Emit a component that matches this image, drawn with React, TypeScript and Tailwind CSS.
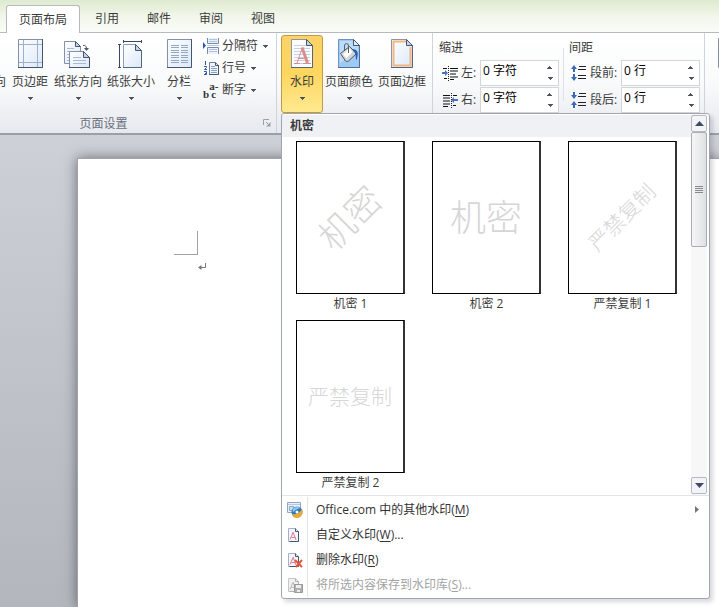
import { useState } from "react";
import type { ReactNode } from "react";

const tabs = ["页面布局", "引用", "邮件", "审阅", "视图"];

const watermarks = [
  { name: "机密 1", text: "机密", style: "text-[36px] -rotate-45" },
  { name: "机密 2", text: "机密", style: "text-[36px]" },
  { name: "严禁复制 1", text: "严禁复制", style: "text-[21px] -rotate-45" },
  { name: "严禁复制 2", text: "严禁复制", style: "text-[21px]" },
];

function Caret() {
  return (
    <svg width="5" height="3" viewBox="0 0 5 3" className="shrink-0">
      <path d="M0 0h5v1H4v1H3v1H2V2H1V1H0z" fill="#505358" />
    </svg>
  );
}

function MarginsIcon() {
  return (
    <svg width="32" height="32" viewBox="0 0 32 32">
      <defs>
        <linearGradient id="paper" x1="0" y1="0" x2="1" y2="1">
          <stop offset="0" stopColor="#fff" />
          <stop offset="1" stopColor="#dbe8f8" />
        </linearGradient>
      </defs>
      <path d="M4.500 1.500h24v28h-24z" fill="url(#paper)" stroke="#8290a8" />
      <path d="M4 29.500h24.500V1" fill="none" stroke="#465672" />
      <path d="M9.500 2v27M23.500 2v27M5 6.500h23M5 24.500h23" stroke="#9fb0c9" />
    </svg>
  );
}

function OrientationIcon() {
  return (
    <svg width="32" height="32" viewBox="0 0 32 32">
      <path d="M2.500 3.500h11l5 5v17h-16z" fill="url(#paper)" stroke="#8290a8" />
      <path d="M13.500 3.500v5h5z" fill="#c3d3e8" stroke="#465672" />
      <path d="M5 10.500h7M5 13.500h4M5 16.500h2M5 19.500h2M5 22.500h2" stroke="#a9bad2" />
      <path d="M7.500 13.500h14l6 6v10h-20z" fill="url(#paper)" stroke="#8290a8" />
      <path d="M21.500 13.500v6h6z" fill="#c3d3e8" stroke="#465672" />
      <path d="M7 29.500h20.500V19" fill="none" stroke="#465672" />
      <path d="M11 19.500h8M11 22.500h13M11 25.500h13" stroke="#a9bad2" />
      <path d="M21 7.500q3-1 3.500 3" fill="none" stroke="#4a566e" />
      <path d="M22 10h5l-2.500 3z" fill="#4a566e" />
    </svg>
  );
}

function SizeIcon() {
  return (
    <svg width="32" height="32" viewBox="0 0 32 32">
      <path d="M8.500 6.500h12l6 6v17h-18z" fill="url(#paper)" stroke="#8f9db4" />
      <path d="M20.500 6.500v6h6z" fill="#c3d3e8" stroke="#465672" />
      <path d="M8 29.500h18.500V12" fill="none" stroke="#56657f" />
      <path d="M8 3.500h18M8.500 2v3M26.500 2v3M4.500 7v22M3 6.500h3M3 29.500h3" stroke="#3a4868" />
    </svg>
  );
}

function ColumnsIcon() {
  return (
    <svg width="32" height="32" viewBox="0 0 32 32">
      <path d="M4.500 1.500h24v28h-24z" fill="url(#paper)" stroke="#8290a8" />
      <path d="M4 29.500h24.500V1" fill="none" stroke="#465672" />
      <path
        d="M8 7.500h8M18 7.500h7M8 9.500h8M18 9.500h7M8 12.500h8M18 12.500h7M8 14.500h8M18 14.500h7M8 17.500h8M18 17.500h7M8 19.500h8M18 19.500h7M8 22.500h8M18 22.500h7M8 24.500h8M18 24.500h7"
        stroke="#94a6c2"
      />
    </svg>
  );
}

function WatermarkIcon() {
  return (
    <svg width="32" height="32" viewBox="0 0 32 32">
      <path d="M5.500 1.500h15l6 6v22h-21z" fill="#fbfcfe" stroke="#8b95a6" />
      <path d="M8 7.500h12M8 10.500h16M8 13.500h16M8 16.500h16M8 19.500h16M8 22.500h16M8 25.500h16" stroke="#c6d1e2" />
      <path d="M8 25.500h6M17 25.500h8M11 25L16.500 9.500M12.500 20.500h8" stroke="#d98e8e" fill="none" />
      <path d="M16 9.500L21.500 25" stroke="#d98e8e" strokeWidth="3" />
      <path d="M20.500 1.500v6h6z" fill="#c3d3e8" stroke="#465672" />
      <path d="M5 29.500h21.500V7" fill="none" stroke="#56657f" />
    </svg>
  );
}

function PageColorIcon() {
  return (
    <svg width="32" height="32" viewBox="0 0 32 32">
      <path d="M5.500 1.500h15l6 6v22h-21z" fill="#9ccaf4" stroke="#6f93bd" />
      <path d="M7 3h13v5h5v5L7 25z" fill="#bcdcf9" />
      <path d="M20.500 1.500v6h6z" fill="#e4effb" stroke="#465672" />
      <path d="M5 29.500h21.500V7" fill="none" stroke="#4d6e98" />
      <path d="M7.500 15.500l9-7 7 7-8 7.500q-2 1-3 0z" fill="#d4d7da" stroke="#50565e" />
      <path d="M10 16l6.500-5.500 3 3.500-6 6z" fill="#fff" />
      <path d="M11.500 12V8q0-2.500 2-2.500t2 2.500v7" fill="none" stroke="#5a6069" />
      <path d="M19 11c6 0 7 4 4.500 11-1.500-2 .5-6-3-8.500z" fill="#2a60ad" />
    </svg>
  );
}

function PageBorderIcon() {
  return (
    <svg width="32" height="32" viewBox="0 0 32 32">
      <path d="M5.500 1.500h15l6 6v22h-21z" fill="url(#paper)" stroke="#8b95a6" />
      <path d="M20 3.500H7.500v24h17V9" fill="none" stroke="#f0b684" strokeWidth="2" />
      <path d="M20.500 1.500v6h6z" fill="#c3d3e8" stroke="#465672" />
      <path d="M5 29.500h21.500V7" fill="none" stroke="#56657f" />
    </svg>
  );
}

function PositionIcon() {
  return (
    <svg width="32" height="32" viewBox="0 0 32 32" className="shrink-0">
      <path d="M.5.500h26v29H.5z" fill="url(#paper)" stroke="#8290a8" />
      <path d="M4 5.500h18M4 24.500h18" stroke="#94a6c2" />
      <path d="M8 9h10v10H8z" fill="#e9a55c" />
    </svg>
  );
}

function BreaksIcon() {
  return (
    <svg width="18" height="16" viewBox="0 0 18 16">
      <path d="M4.500 0v5.500h11V0M4.500 16V9.500h11V16" fill="#eaf1fb" stroke="#7489ad" />
      <path d="M6 1.500h8M6 3.500h8M6 11.500h8M6 13.500h8" stroke="#b4c4dd" />
      <path d="M4 7.500h12" stroke="#b9c6da" />
      <path d="M0 4l3 3.500L0 11z" fill="#2b58a8" />
    </svg>
  );
}

function LineNumberIcon() {
  return (
    <svg width="18" height="16" viewBox="0 0 18 16">
      <path d="M6.500 2.500h6l3 3v9h-9z" fill="#eef4fc" stroke="#6d7fa0" />
      <path d="M12.500 2.500v3h3" fill="none" stroke="#465672" />
      <path d="M6 14.500h9.500V5" fill="none" stroke="#465672" />
      <path d="M8 6.500h4M8 8.500h6M8 10.500h6M8 12.500h6" stroke="#8aa1c4" />
      <path d="M2.500 1v4M1 6.500h2.500v1L1.500 9.500H4M1 11.500h2.500v3H1M2 13.500h1" stroke="#2b58a8" fill="none" />
    </svg>
  );
}

function HyphenIcon() {
  return (
    <span className="flex h-4 w-[18px] items-end font-['Liberation_Serif',serif] text-[11px] leading-[8px] font-bold text-[#33363c]">
      <span>b</span>
      <span className="flex flex-col">
        <span>a-</span>
        <span>c</span>
      </span>
    </span>
  );
}

function IndentIcon({ right }: { right?: boolean }) {
  return (
    <svg width="16" height="15" viewBox="0 0 16 15" className="shrink-0">
      {right ? (
        <>
          <path d="M1 2.500h7M1 5h7M1 8h7M1 11h7M1 13.500h5M11 2.500h4M11 12.500h3" stroke="#111" />
          <path d="M9 7l3-3v2h4v2h-4v2z" fill="#4a72b8" />
          <path d="M9.500 0v15" stroke="#222" strokeDasharray="1 1" />
        </>
      ) : (
        <>
          <path d="M8 2.500h8M8 5h8M8 8h6M8 11h8M8 13.500h4M1 2.500h4M2 12.500h3" stroke="#111" />
          <path d="M6 7L3 4v2H0v2h3v2z" fill="#4a72b8" />
          <path d="M6.500 0v15" stroke="#222" strokeDasharray="1 1" />
        </>
      )}
    </svg>
  );
}

function SpacingIcon({ after }: { after?: boolean }) {
  return (
    <svg width="16" height="16" viewBox="0 0 16 16" className="shrink-0">
      <path d="M8 1.500h7M7 4.500h8M7 10.500h8M7 13.500h8" stroke="#222" />
      <path
        d={after ? "M2 0h2v3h2L3 7 0 3h2zM3 9l3 4H4v3H2v-3H0z" : "M3 0l3 4H4v3H2V4H0zM2 9h2v3h2l-3 4-3-4h2z"}
        fill="#3e69b0"
      />
    </svg>
  );
}

function LauncherIcon() {
  return (
    <svg width="8" height="8" viewBox="0 0 8 8">
      <path d="M.5 6V.5H6" fill="none" stroke="#9aa0a9" />
      <path d="M3 3l2 2" stroke="#9aa0a9" />
      <path d="M7.500 3v4.500H3z" fill="#9aa0a9" />
    </svg>
  );
}

function SmallPage({ gray, children }: { gray?: boolean; children?: ReactNode }) {
  const dark = gray ? "#b0b0b0" : "#465672";
  const red = gray ? "#b8b8b8" : "#de7c89";
  return (
    <svg width="16" height="16" viewBox="0 0 16 16">
      <path d="M1.500 1.500h7l3 3v10h-10z" fill={gray ? "#f1f1f1" : "#f2f6fc"} stroke={gray ? "#c6c6c6" : "#a3b0c5"} />
      <path d="M8.500 1.500v3h3v10h-9" fill="none" stroke={dark} />
      <path d="M3 12.500L6 5.500M4.500 10.500h4M6 5l3 8" stroke={red} fill="none" />
      {children}
    </svg>
  );
}

function OfficeIcon() {
  return (
    <svg width="16" height="16" viewBox="0 0 16 16">
      <path d="M.5.500h13v10H.5z" fill="#e8f0fa" stroke="#8fa6c6" />
      <path d="M1 2.500h12" stroke="#b5c8e0" />
      <path d="M2.500 4.500h4v4h-4z" fill="#cfdef0" stroke="#8fa6c6" />
      <circle cx="10" cy="10" r="5.500" fill="#2e78b8" />
      <path d="M5 12c3 1 7 0 10-5 2 4-1 9-5 9-3 0-5-2-5-4z" fill="#e9a93a" />
      <path d="M5.500 7.500c2-3 6-3 7.500-1-3 0-5 2-7 4z" fill="#8bc7ed" />
      <circle cx="10" cy="10" r="1.500" fill="#fff" />
    </svg>
  );
}

function BigButton({ icon, label, width, caret = true, active }: {
  icon: ReactNode;
  label: string;
  width: string;
  caret?: boolean;
  active?: boolean;
}) {
  return (
    <button
      className={`flex h-[78px] shrink-0 flex-col items-center rounded-[3px] border pt-[2px] ${width} ${
        active ? "border-[#c29b42] bg-linear-to-b from-[#fbd367] via-[#fdd65f] to-[#ffe98f]" : "border-transparent"
      }`}
    >
      {icon}
      <span className="mt-1 leading-4 whitespace-nowrap">{label}</span>
      {caret && <span className="mt-[7px] flex"><Caret /></span>}
    </button>
  );
}

function SmallButton({ icon, label }: { icon: ReactNode; label: string }) {
  return (
    <button className="flex h-[22px] items-center gap-px">
      <span className="w-[18px]">{icon}</span>
      <span className="mr-1 whitespace-nowrap">{label}</span>
      <Caret />
    </button>
  );
}

function Spinner({ id, icon, label, initial }: { id: string; icon: ReactNode; label: string; initial: string }) {
  const [value, setValue] = useState(initial);
  const step = (by: number) => {
    const [num, unit] = value.split(" ");
    setValue(`${Math.max(0, parseInt(num) + by)} ${unit}`);
  };

  return (
    <div className="flex h-[26px] items-center">
      {icon}
      <label htmlFor={id} className="ml-[3px] flex-1 whitespace-nowrap">{label}</label>
      <div className="flex h-full w-[79px] border border-[#d3d5d9] bg-white">
        <input
          id={id}
          value={value}
          onChange={(e) => setValue(e.target.value)}
          className="w-full min-w-0 bg-transparent pb-1 pl-[2px] text-black outline-none"
        />
        <div className="flex w-4 shrink-0 flex-col justify-center gap-2">
          <button aria-label={`${label} 增加`} onClick={() => step(1)} className="flex rotate-180 justify-center"><Caret /></button>
          <button aria-label={`${label} 减少`} onClick={() => step(-1)} className="flex justify-center"><Caret /></button>
        </div>
      </div>
    </div>
  );
}

function MenuItem({ icon, label, hotkey, dots, disabled, submenu }: {
  icon: ReactNode;
  label: string;
  hotkey: string;
  dots?: boolean;
  disabled?: boolean;
  submenu?: boolean;
}) {
  return (
    <button disabled={disabled} className="flex h-[25px] w-full items-center text-left text-[#333] disabled:text-[#a3a3a3]">
      <span className="flex h-full w-[26px] items-center border-r border-[#e2e4e7] pl-[5px]">{icon}</span>
      <span className="flex-1 pt-px pl-2">
        {label}(<u className="underline-offset-2">{hotkey}</u>){dots && "..."}
      </span>
      {submenu && (
        <svg width="4" height="7" viewBox="0 0 4 7" className="mr-[10px]">
          <path d="M0 0l4 3.500L0 7z" fill="#777" />
        </svg>
      )}
    </button>
  );
}

function WatermarkMenu() {
  return (
    <div className="absolute top-full left-0 z-10 w-[429px] rounded-[3px] border border-[#a1a5ad] bg-white pb-px shadow-[3px_3px_4px_rgba(60,60,90,0.2)]">
      <div className="flex border-b border-[#e2e4e7]">
        <div className="flex-1 pt-px">
          <h2 className="bg-[#eff1f5] pl-2 leading-[22px] font-bold">机密</h2>
          <div className="grid grid-cols-[repeat(3,109px)] gap-x-[27px] gap-y-2 pt-1 pb-1 pl-[14px]">
            {watermarks.map((mark) => (
              <button key={mark.name} className="flex flex-col items-center">
                <span className="flex h-[153px] w-full items-center justify-center border border-r-2 border-black border-r-[#333]">
                  <span className={`leading-none font-light whitespace-nowrap text-[#d6d6d6] ${mark.style}`}>{mark.text}</span>
                </span>
                <span className="mt-[2px] leading-4">{mark.name}</span>
              </button>
            ))}
          </div>
        </div>
        <div className="mr-[2px] flex w-4 flex-col bg-[#f7f7f8] py-px">
          <button aria-label="向上滚动" className="flex h-[17px] items-center justify-center rounded-[2px] border border-[#b6b9bf] bg-[#f3f4f6]">
            <svg width="9" height="5" viewBox="0 0 9 5"><path d="M4.500 0L9 5H0z" fill="#3f4a6b" /></svg>
          </button>
          <div className="flex h-[115px] flex-col items-center justify-center rounded-[2px] border border-[#a9acb1] bg-linear-to-r from-[#f6f6f7] to-[#dfe0e3]">
            <svg width="8" height="7" viewBox="0 0 8 7"><path d="M0 .5h8M0 2.500h8M0 4.500h8M0 6.500h8" stroke="#85888e" /></svg>
          </div>
          <button aria-label="向下滚动" className="mt-auto flex h-[17px] items-center justify-center rounded-[2px] border border-[#b6b9bf] bg-[#f3f4f6]">
            <svg width="9" height="5" viewBox="0 0 9 5"><path d="M0 0h9L4.500 5z" fill="#3f4a6b" /></svg>
          </button>
        </div>
      </div>
      <div className="pt-px">
        <MenuItem icon={<OfficeIcon />} label="Office.com 中的其他水印" hotkey="M" submenu />
        <MenuItem icon={<SmallPage />} label="自定义水印" hotkey="W" dots />
        <MenuItem
          icon={<SmallPage><path d="M8 8l7 7M15 8l-6 7" stroke="#e4563d" strokeWidth="2" /></SmallPage>}
          label="删除水印"
          hotkey="R"
        />
        <MenuItem
          icon={
            <SmallPage gray>
              <path d="M7.500 7.500h8v8h-8z" fill="#b0b0b0" stroke="#9a9a9a" />
              <path d="M9 8h5v3H9zM10 13h3v2h-3z" fill="#eee" />
            </SmallPage>
          }
          label="将所选内容保存到水印库"
          hotkey="S"
          dots
          disabled
        />
      </div>
    </div>
  );
}

export default function App() {
  const [tab, setTab] = useState("页面布局");

  return (
    <div className="flex min-h-screen flex-col overflow-hidden bg-[#c9cdd2] font-['Open_Sans','Noto_Sans_CJK_SC',sans-serif] text-[12px] text-[#3b3b3b]">
      <nav className="flex h-[33px] items-end border-b border-[#b6babf] bg-linear-to-b from-[#deead0] via-[#f1f6ea] to-[#fbfcf9] pl-[6px]">
        {tabs.map((name) => (
          <button
            key={name}
            onClick={() => setTab(name)}
            className={`h-[28px] rounded-t-[3px] border-x border-t whitespace-nowrap ${
              name === tab ? "-mb-px mr-px border-[#b6babf] bg-white px-3" : "border-transparent px-[13px]"
            }`}
          >
            {name}
          </button>
        ))}
      </nav>

      <div className="relative z-10 flex border-b-2 border-[#9a9fa8] bg-linear-to-b from-white via-[#f9fafb] to-[#e6e9ee]">
        <section className="flex w-[277px] shrink-0 flex-col border-r border-[#d0d3d8] pt-[2px]">
          <div className="flex">
            <button className="flex h-[78px] w-[6px] justify-end overflow-hidden pt-[39px] leading-4">
              <span>向</span>
            </button>
            <BigButton icon={<MarginsIcon />} label="页边距" width="w-12" />
            <BigButton icon={<OrientationIcon />} label="纸张方向" width="w-12" />
            <BigButton icon={<SizeIcon />} label="纸张大小" width="w-[58px]" />
            <BigButton icon={<ColumnsIcon />} label="分栏" width="w-[38px]" />
            <div className="ml-[5px] flex flex-col">
              <SmallButton icon={<BreaksIcon />} label="分隔符" />
              <SmallButton icon={<LineNumberIcon />} label="行号" />
              <SmallButton icon={<HyphenIcon />} label="断字" />
            </div>
          </div>
          <div className="flex h-5 items-center pl-1">
            <h2 className="flex-1 pt-[2px] pr-[60px] text-center text-[#6a707b]">页面设置</h2>
            <button aria-label="页面设置对话框" className="mr-[5px]"><LauncherIcon /></button>
          </div>
        </section>

        <section className="flex shrink-0 border-r border-[#d0d3d8] pt-[2px] pr-[3px] pl-1">
          <div className="relative h-[78px]">
            <BigButton icon={<WatermarkIcon />} label="水印" width="w-[42px]" active />
            <WatermarkMenu />
          </div>
          <BigButton icon={<PageColorIcon />} label="页面颜色" width="w-[52px]" />
          <BigButton icon={<PageBorderIcon />} label="页面边框" width="w-[54px]" caret={false} />
        </section>

        <section className="flex shrink-0 border-r border-[#d0d3d8] pt-[7px] pr-1 pl-[6px]">
          <div className="flex w-[120px] flex-col">
            <h3 className="mb-1 leading-4">缩进</h3>
            <div className="flex flex-col gap-px pl-[3px]">
              <Spinner id="left" icon={<IndentIcon />} label="左:" initial="0 字符" />
              <Spinner id="right" icon={<IndentIcon right />} label="右:" initial="0 字符" />
            </div>
          </div>
          <div className="mr-[5px] ml-1 mt-2 mb-8 w-px bg-[#dfe1e6]" />
          <div className="flex w-[131px] flex-col">
            <h3 className="mb-1 leading-4">间距</h3>
            <div className="flex flex-col gap-px pl-[2px]">
              <Spinner id="before" icon={<SpacingIcon />} label="段前:" initial="0 行" />
              <Spinner id="after" icon={<SpacingIcon after />} label="段后:" initial="0 行" />
            </div>
          </div>
        </section>

        <section className="min-w-0 flex-1 overflow-hidden pt-[5px] pl-[13px]">
          <button aria-label="位置" className="flex"><PositionIcon /></button>
        </section>
      </div>

      <main className="flex flex-1 bg-linear-to-b from-[#cdd0d6] to-[#b3b7bd] pt-[23px] pl-[77px]">
        <article className="flex-1 border-t border-l border-[#a0a3a8] bg-white pt-[72px] pl-24 shadow-[0_0_12px_rgba(40,44,52,0.6)]">
          <div className="size-6 border-r border-b border-[#a3a3a3]" />
          <svg width="8" height="8" viewBox="0 0 8 8" className="mt-2 ml-6">
            <path d="M7.500 0v4.500H2" fill="none" stroke="#777" />
            <path d="M0 4.500L3.500 2v5z" fill="#777" />
          </svg>
        </article>
      </main>
    </div>
  );
}
